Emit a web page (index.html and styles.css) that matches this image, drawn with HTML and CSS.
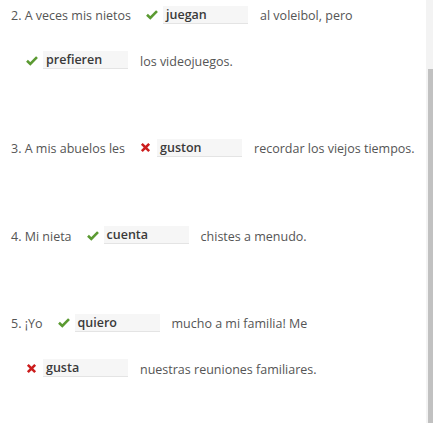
FILE: index.html
```html
<!DOCTYPE html>
<html lang="es">
<head>
<meta charset="utf-8">
<title>Quiz</title>
<link rel="stylesheet" href="styles.css">
</head>
<body>
<div class="page">
  <div class="quiz">
    <p class="item">2. A veces mis nietos<span class="ans ok"><svg class="ic" viewBox="0 0 12 10"><path d="M1 5.2 L4.3 8.4 L11 1.6" /></svg><span class="box">juegan</span></span>al voleibol, pero <span class="ans ok"><svg class="ic" viewBox="0 0 12 10"><path d="M1 5.2 L4.3 8.4 L11 1.6" /></svg><span class="box">prefieren</span></span>los videojuegos.</p>
    <p class="item">3. A mis abuelos les<span class="ans bad"><svg class="ic" viewBox="0 0 12 12"><path d="M2 2 L10 10 M10 2 L2 10" /></svg><span class="box">guston</span></span>recordar los viejos tiempos.</p>
    <p class="item">4. Mi nieta<span class="ans ok"><svg class="ic" viewBox="0 0 12 10"><path d="M1 5.2 L4.3 8.4 L11 1.6" /></svg><span class="box">cuenta</span></span>chistes a menudo.</p>
    <p class="item">5. ¡Yo<span class="ans ok"><svg class="ic" viewBox="0 0 12 10"><path d="M1 5.2 L4.3 8.4 L11 1.6" /></svg><span class="box">quiero</span></span>mucho a mi familia! Me<br><span class="ans bad"><svg class="ic" viewBox="0 0 12 12"><path d="M2 2 L10 10 M10 2 L2 10" /></svg><span class="box">gusta</span></span>nuestras reuniones familiares.</p>
  </div>
  <div class="scrollbar"><div class="thumb"></div></div>
</div>
</body>
</html>
```
FILE: styles.css
```css
html, body {
  margin: 0;
  padding: 0;
  background: #ffffff;
}
.page {
  display: flex;
  height: 423px;
  overflow: hidden;
}
.quiz {
  flex: 1;
  padding: 0 0 0 11px;
  margin-top: -7px;
  font-family: "Open Sans", "DejaVu Sans", sans-serif;
  font-size: 12.5px;
  color: #555555;
}
.item {
  margin: 0 0 42px 0;
  line-height: 45.5px;
}
.ans {
  display: inline-flex;
  align-items: center;
  vertical-align: middle;
  margin: -4px 12px 0 15px;
  line-height: 18px;
}
.ic {
  width: 12px;
  height: 11px;
  margin-right: 5px;
  fill: none;
  stroke-width: 2.6;
}
.ok .ic path {
  stroke: #5b9a32;
}
.bad .ic {
  width: 11px;
  height: 11px;
  margin-right: 6px;
}
.bad .ic path {
  stroke: #cc1d1d;
  stroke-width: 2.8;
}
.box {
  display: inline-block;
  width: 82px;
  height: 17px;
  padding-left: 3px;
  background: #f6f6f6;
  border-bottom: 1px solid #e4e4e4;
  color: #3a3a3a;
  font-weight: 600;
  font-size: 12.5px;
  line-height: 17px;
}
.scrollbar {
  width: 7px;
  background: #f3f3f3;
  display: flex;
  flex-direction: column;
  padding-top: 69px;
  align-items: flex-end;
}
.thumb {
  width: 5px;
  flex: 1;
  background: #c1c1c1;
}
```
